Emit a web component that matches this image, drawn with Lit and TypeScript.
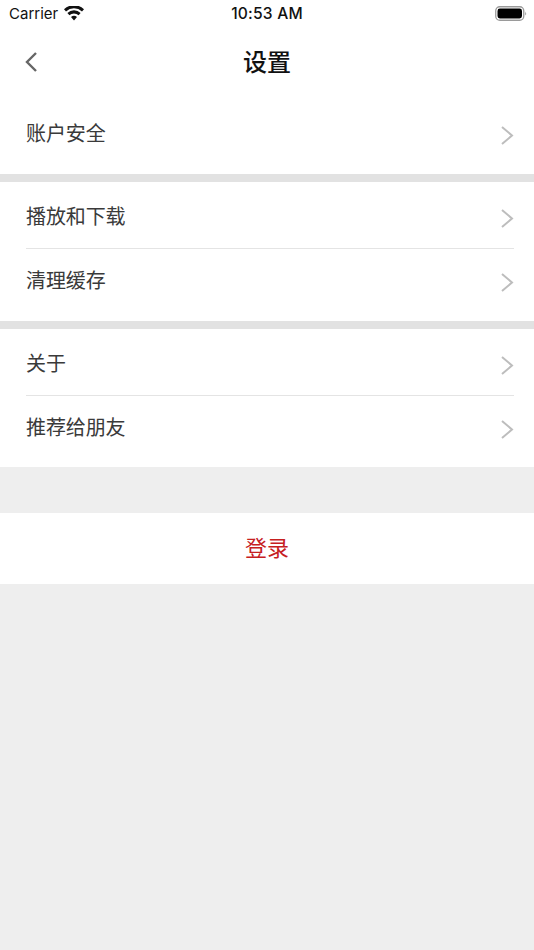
import { LitElement, html, css } from "lit";
import { customElement } from "lit/decorators.js";

const chevron = html`<svg class="chev" width="13" height="19" viewBox="0 0 13 19"><path d="M1 1 L11 9.5 L1 18" fill="none" stroke="#bdbdbd" stroke-width="2"/></svg>`;

@customElement("app-root")
export class AppRoot extends LitElement {
  static styles = css`
    :host { display: block; width: 534px; height: 950px; background: #eeeeee; font-family: "Noto Sans CJK SC", "Liberation Sans", sans-serif; overflow: hidden; }
    .status { height: 27px; background: #fff; display: grid; grid-template-columns: 1fr auto 1fr; align-items: center; padding: 0 7px 0 9px; font-family: Inter, "Liberation Sans", sans-serif; font-size: 15px; color: #111; }
    .left { display: flex; align-items: center; gap: 6px; }
    .time { font-weight: 500; font-size: 15.6px; letter-spacing: 0.2px; padding-right: 2px; }
    .batt { justify-self: end; display: flex; }
    .nav { height: 70px; background: #fff; display: flex; align-items: center; justify-content: center; position: relative; font-size: 24px; font-weight: 500; color: #111; }
    .nav span { line-height: 1; margin-bottom: 3px; }
    .back { position: absolute; left: 24px; top: 24px; }
    .group { background: #fff; }
    .sep { height: 8px; background: #e2e2e2; }
    .gap { height: 46px; }
    .row { display: flex; justify-content: space-between; margin: 0 20px 0 26px; font-size: 20px; line-height: 30px; letter-spacing: -0.1px; color: #3a3a3a; box-sizing: border-box; }
    .row .chev { margin-top: 8px; }
    .r1 { height: 77px; padding-top: 21px; }
    .r2 { height: 67px; padding-top: 19px; border-bottom: 1px solid #e4e4e4; }
    .r3 { height: 72px; padding-top: 16px; }
    .r3b { height: 71px; padding-top: 16px; }
    .login { height: 71px; background: #fff; display: flex; align-items: center; justify-content: center; font-size: 22px; color: #c6201f; }
    .login span { line-height: 1; margin-bottom: 5px; }
  `;
  render() {
    return html`
      <div class="status">
        <div class="left"><span>Carrier</span>
          <svg width="20" height="15" viewBox="0 0 20 15"><path d="M10 14.5 L7 11 A4.6 4.6 0 0 1 13 11 Z M5.4 9.2 L3.4 7 A9.6 9.6 0 0 1 16.6 7 L14.6 9.2 A6.8 6.8 0 0 0 5.4 9.2 Z M2 5.4 L0 3.2 A14.6 14.6 0 0 1 20 3.2 L18 5.4 A11.8 11.8 0 0 0 2 5.4 Z" fill="#111"/></svg>
        </div>
        <div class="time">10:53 AM</div>
        <div class="batt">
          <svg width="32" height="15" viewBox="0 0 32 15"><rect x="0.75" y="0.75" width="28" height="13.5" rx="4" fill="none" stroke="#9a9a9a" stroke-width="1.3"/><rect x="2.5" y="2.5" width="24.5" height="10" rx="2.4" fill="#000"/><path d="M30.2 5.5 Q32 7.5 30.2 9.5 Z" fill="#9a9a9a"/></svg>
        </div>
      </div>
      <div class="nav">
        <svg class="back" width="14" height="22" viewBox="0 0 14 22"><path d="M12 2 L3 11 L12 20" fill="none" stroke="#666" stroke-width="2.4"/></svg>
        <span>设置</span>
      </div>
      <div class="group"><div class="row r1"><span>账户安全</span>${chevron}</div></div>
      <div class="sep"></div>
      <div class="group">
        <div class="row r2"><span>播放和下载</span>${chevron}</div>
        <div class="row r3"><span>清理缓存</span>${chevron}</div>
      </div>
      <div class="sep"></div>
      <div class="group">
        <div class="row r2"><span>关于</span>${chevron}</div>
        <div class="row r3b"><span>推荐给朋友</span>${chevron}</div>
      </div>
      <div class="gap"></div>
      <div class="login"><span>登录</span></div>
    `;
  }
}
